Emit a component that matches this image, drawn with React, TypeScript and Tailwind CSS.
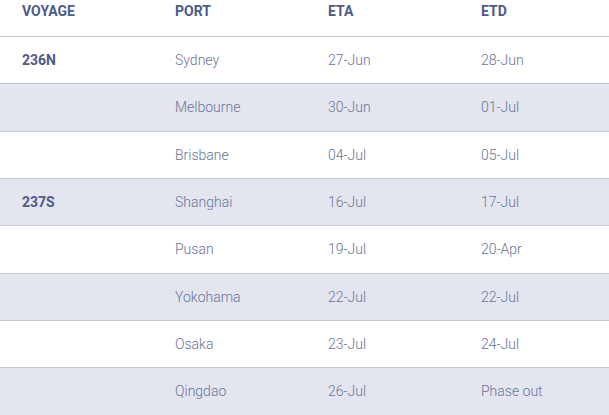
import React from "react";

const rows: [string, string, string, string][] = [
  ["236N", "Sydney", "27-Jun", "28-Jun"],
  ["", "Melbourne", "30-Jun", "01-Jul"],
  ["", "Brisbane", "04-Jul", "05-Jul"],
  ["237S", "Shanghai", "16-Jul", "17-Jul"],
  ["", "Pusan", "19-Jul", "20-Apr"],
  ["", "Yokohama", "22-Jul", "22-Jul"],
  ["", "Osaka", "23-Jul", "24-Jul"],
  ["", "Qingdao", "26-Jul", "Phase out"],
];

export default function App() {
  return (
    <div
      className="w-[609px] h-[415px] overflow-hidden bg-white"
      style={{ fontFamily: "Roboto, 'Liberation Sans', sans-serif" }}
    >
      <div className="w-[612px]">
        <div className="grid grid-cols-[153px_153px_153px_153px] h-[36px] pt-[1px] text-[14px] leading-[20px] font-bold text-[#4e5a88]">
          <div className="pl-[22px]">VOYAGE</div>
          <div className="pl-[22px]">PORT</div>
          <div className="pl-[22px]">ETA</div>
          <div className="pl-[22px]">ETD</div>
        </div>
        {rows.map((r, i) => (
          <div
            key={i}
            className={`grid grid-cols-[153px_153px_153px_153px] h-[47.333px] border-t border-[#c6cbdb] items-center text-[14px] leading-[20px] ${
              i % 2 === 1 ? "bg-[#e3e6ef]" : "bg-white"
            }`}
          >
            <div className="pl-[22px] font-bold text-[#4e5a88]">{r[0]}</div>
            <div className="pl-[22px] font-light text-[#6a7399]">{r[1]}</div>
            <div className="pl-[22px] font-light text-[#6a7399]">{r[2]}</div>
            <div className="pl-[22px] font-light text-[#6a7399]">{r[3]}</div>
          </div>
        ))}
      </div>
    </div>
  );
}
